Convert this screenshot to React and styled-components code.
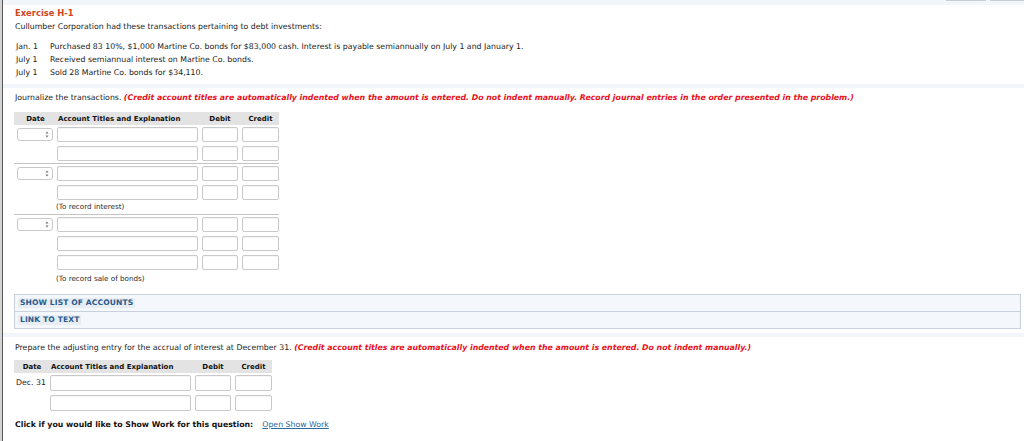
import React from "react";
import styled, { createGlobalStyle } from "styled-components";

const Global = createGlobalStyle`
  html, body { margin: 0; padding: 0; background: #fff; }
  body { font-family: "DejaVu Sans", Verdana, sans-serif; font-size: 7.8px; color: #222; }
`;

const Page = styled.div`
  width: 1024px;
  height: 441px;
  overflow: hidden;
  display: flex;
  border-left: 2px solid #d4d4d4;
  box-sizing: border-box;
`;

const Main = styled.div`
  flex: 1;
  border-left: 1px solid #555;
  position: relative;
`;

const Band = styled.div`
  height: ${(p) => p.h || 4}px;
  background: #f2f5f9;
`;

const Tabs = styled.div`
  position: absolute;
  top: 0;
  right: 0;
  display: flex;
  gap: 4px;
  > span {
    width: 40px;
    height: 1px;
    background: #c8ced8;
  }
  > span:last-child { width: 34px; }
`;

const Section = styled.div`
  padding: ${(p) => p.pad || "0"};
  padding-left: 11px;
`;

const Title = styled.div`
  color: #d2461e;
  font-weight: bold;
  font-size: 8.4px;
  line-height: 13px;
  padding-left: 1px;
`;

const Line = styled.div`
  line-height: 13px;
  white-space: nowrap;
  padding-left: 1px;
`;

const Trans = styled.div`
  display: grid;
  grid-template-columns: 34px auto;
  margin-top: 7px;
  margin-left: 2px;
  line-height: 13px;
  white-space: nowrap;
`;

const Warn = styled.span`
  color: #e8101c;
  font-weight: bold;
  font-style: italic;
`;

const Table = styled.div`
  width: ${(p) => p.w}px;
  margin-top: ${(p) => p.mt || 8}px;
`;

const Head = styled.div`
  display: grid;
  grid-template-columns: ${(p) => p.cols};
  background: #e3e3e3;
  height: 13px;
  align-items: center;
  font-weight: bold;
  font-size: 7px;
  color: #111;
  > span { text-align: center; }
  > span:nth-child(2) { text-align: left; padding-left: 1px; }
  > span:nth-child(3) { padding-right: 4px; }
`;

const Row = styled.div`
  display: grid;
  grid-template-columns: ${(p) => p.cols};
  align-items: start;
  height: ${(p) => p.h || 19}px;
  padding-top: 2px;
  box-sizing: border-box;
`;

const Field = styled.div`
  height: ${(p) => p.h || 15}px;
  margin-right: 4px;
  border: 1px solid #c9c9c9;
  border-radius: 2px;
  box-sizing: border-box;
  background: #fff;
  box-shadow: inset 0 1px 1px rgba(0,0,0,0.04);
  &:last-child { margin-right: 0; }
`;

const Select = styled.div`
  width: 36px;
  height: 13px;
  margin: 1px 0 0 3px;
  border: 1px solid #c9c9c9;
  border-radius: 3px;
  box-sizing: border-box;
  display: flex;
  justify-content: flex-end;
  align-items: center;
  padding-right: 3px;
`;

const Note = styled.div`
  padding-left: 42px;
  height: ${(p) => p.h || 12}px;
  line-height: ${(p) => p.lh || 10}px;
  font-size: 7.2px;
  color: #2a2a2a;
`;

const Divider = styled.div`
  border-top: 1px solid #c4c4c4;
`;

const Links = styled.div`
  margin: 10px 3px 0 0;
  border: 1px solid #c9d1dc;
  background: #f4f7fb;
  > div + div { border-top: 1px solid #c9d1dc; }
`;

const LinkRow = styled.div`
  height: 16px;
  display: flex;
  align-items: center;
  padding-left: 3px;
  > span {
    background: #e8edf4;
    color: #2a5a8c;
    font-weight: bold;
    font-size: 7.6px;
    padding: 0 2px;
    line-height: 10px;
    letter-spacing: 0.1px;
  }
`;

const DateLabel = styled.span`
  line-height: 16px;
  padding-left: 2px;
  color: #222;
`;

const Footer = styled.div`
  margin-top: 5px;
  line-height: 13px;
  font-weight: bold;
  color: #111;
  white-space: nowrap;
  padding-left: 1px;
  a {
    font-weight: normal;
    color: #2a6aa0;
    text-decoration: underline;
    margin-left: 9px;
  }
`;

const cols1 = "43px 145px 40px 37px";
const cols2 = "36px 145px 40px 37px";

function Arrow() {
  return (
    <svg width="4" height="7" viewBox="0 0 4 7">
      <path d="M2 0.5 L3.6 2.6 H0.4 Z M2 6.5 L3.6 4.4 H0.4 Z" fill="#777" />
    </svg>
  );
}

function EntryRow({ select }) {
  return (
    <Row cols={cols1}>
      {select ? <Select><Arrow /></Select> : <span />}
      <Field />
      <Field />
      <Field />
    </Row>
  );
}

export default function App() {
  return (
    <Page>
      <Global />
      <Main>
        <Tabs><span /><span /></Tabs>
        <Band h={5} />
        <Section pad="2px 0 5px">
          <Title>Exercise H-1</Title>
          <Line>Cullumber Corporation had these transactions pertaining to debt investments:</Line>
          <Trans>
            <span>Jan. 1</span><span>Purchased 83 10%, $1,000 Martine Co. bonds for $83,000 cash. Interest is payable semiannually on July 1 and January 1.</span>
            <span>July 1</span><span>Received semiannual interest on Martine Co. bonds.</span>
            <span>July 1</span><span>Sold 28 Martine Co. bonds for $34,110.</span>
          </Trans>
        </Section>
        <Band />
        <Section pad="3px 0 4px">
          <Line>
            Journalize the transactions.{" "}
            <Warn>(Credit account titles are automatically indented when the amount is entered. Do not indent manually. Record journal entries in the order presented in the problem.)</Warn>
          </Line>
          <Table w={265}>
            <Head cols={cols1}>
              <span>Date</span><span>Account Titles and Explanation</span><span>Debit</span><span>Credit</span>
            </Head>
            <EntryRow select />
            <EntryRow />
            <Divider />
            <EntryRow select />
            <EntryRow />
            <Note>(To record interest)</Note>
            <Divider />
            <EntryRow select />
            <EntryRow />
            <EntryRow />
            <Note lh={14}>(To record sale of bonds)</Note>
          </Table>
          <Links>
            <LinkRow><span>SHOW LIST OF ACCOUNTS</span></LinkRow>
            <LinkRow><span>LINK TO TEXT</span></LinkRow>
          </Links>
        </Section>
        <Band />
        <Section pad="4px 0 0">
          <Line>
            Prepare the adjusting entry for the accrual of interest at December 31.{" "}
            <Warn>(Credit account titles are automatically indented when the amount is entered. Do not indent manually.)</Warn>
          </Line>
          <Table w={258} mt={6}>
            <Head cols={cols2}>
              <span>Date</span><span>Account Titles and Explanation</span><span>Debit</span><span>Credit</span>
            </Head>
            <Row cols={cols2} h={20}>
              <DateLabel>Dec. 31</DateLabel>
              <Field h={16} />
              <Field h={16} />
              <Field h={16} />
            </Row>
            <Row cols={cols2} h={20}>
              <span />
              <Field h={16} />
              <Field h={16} />
              <Field h={16} />
            </Row>
          </Table>
          <Footer>
            Click if you would like to Show Work for this question:<a>Open Show Work</a>
          </Footer>
        </Section>
      </Main>
    </Page>
  );
}
